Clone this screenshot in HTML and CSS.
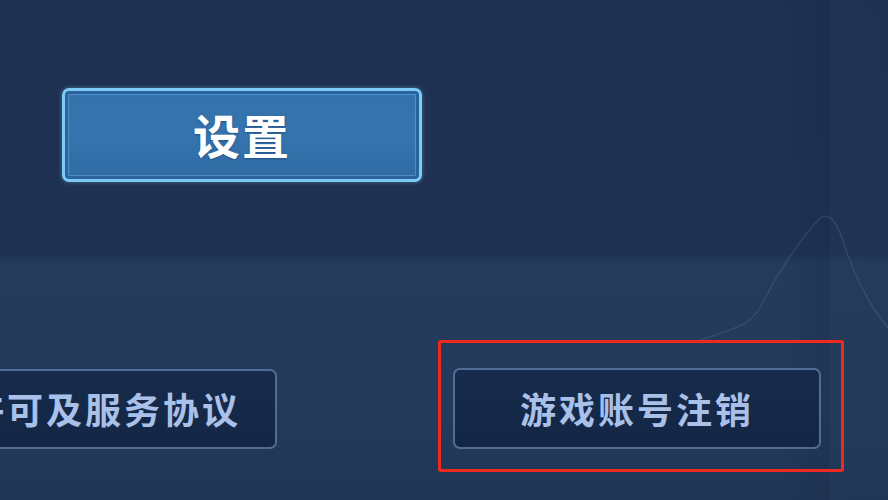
FILE: index.html
```html
<!DOCTYPE html>
<html lang="zh-CN">
  <head>
    <meta charset="UTF-8" />
    <meta name="viewport" content="width=device-width, initial-scale=1.0" />
    <title>设置</title>
    <link rel="stylesheet" href="styles.css">
  </head>
  <body>
    <div class="screen">
      <svg class="ridge" width="200" height="300" viewBox="0 0 200 300">
        <path d="M0 130 C40 118 52 112 60 98 C78 62 100 30 120 8 C132 0 140 20 146 40 C160 80 180 112 200 130" fill="none" stroke="rgba(110,150,200,0.2)" stroke-width="1.5" />
      </svg>

      <div class="top-panel">
        <button class="btn-primary">设置</button>
      </div>

      <div class="bottom-panel">
        <button class="btn-dark btn-agreement">许可及服务协议</button>
        <div class="highlight">
          <button class="btn-dark btn-cancel">游戏账号注销</button>
        </div>
      </div>
    </div>
  </body>
</html>
```

FILE: styles.css
```css
body {
  margin: 0;
  background-color: #1e3152;
  font-family: "Noto Sans CJK SC", "Noto Sans", sans-serif;
}

.screen {
  width: 888px;
  height: 500px;
  position: relative;
  overflow: hidden;
  background:
    linear-gradient(90deg, rgba(0, 0, 0, 0) 0, rgba(0, 0, 0, 0) 780px, rgba(10, 20, 40, 0.12) 828px, rgba(40, 60, 95, 0.15) 830px, rgba(40, 60, 95, 0.1) 888px),
    linear-gradient(180deg, #1e3152 0, #1f3253 255px, #243b5c 262px, #233a5a 420px, #213656 500px);
}

.ridge {
  position: absolute;
  left: 700px;
  top: 210px;
}

.top-panel {
  height: 258px;
  box-sizing: border-box;
  padding: 88px 0 0 62px;
  position: relative;
}

.btn-primary {
  width: 360px;
  height: 94px;
  border: 3px solid #7ccaf5;
  border-radius: 7px;
  background: linear-gradient(180deg, #3472ab 0%, #3574ae 50%, #2f6ba4 100%);
  box-shadow:
    0 0 4px rgba(120, 200, 245, 0.45),
    inset 0 0 0 3px #2b639d,
    inset 0 0 0 4px rgba(120, 180, 230, 0.45);
  color: #ffffff;
  font-family: inherit;
  font-size: 47px;
  font-weight: 700;
  letter-spacing: 2px;
  padding: 0 0 4px;
  text-shadow: 0 1px 2px rgba(20, 50, 90, 0.5);
}

.bottom-panel {
  display: flex;
  align-items: flex-start;
  padding-top: 82px;
  position: relative;
}

.btn-dark {
  height: 80px;
  border: 2px solid #4f6d95;
  border-radius: 7px;
  background: linear-gradient(180deg, #172b4c 0%, #132645 100%);
  color: #a9c0e8;
  font-family: inherit;
  font-size: 36px;
  font-weight: 700;
  letter-spacing: 3px;
  padding: 0 0 2px;
  white-space: nowrap;
}

.btn-agreement {
  width: 345px;
  margin-left: -68px;
  margin-top: 29px;
  text-align: right;
  padding-right: 34px;
}

.highlight {
  margin-left: 161px;
  border: 3px solid #f0291f;
  border-radius: 3px;
  padding: 25px 20px 20px 12px;
}

.btn-cancel {
  width: 368px;
  height: 81px;
  display: block;
}
```
